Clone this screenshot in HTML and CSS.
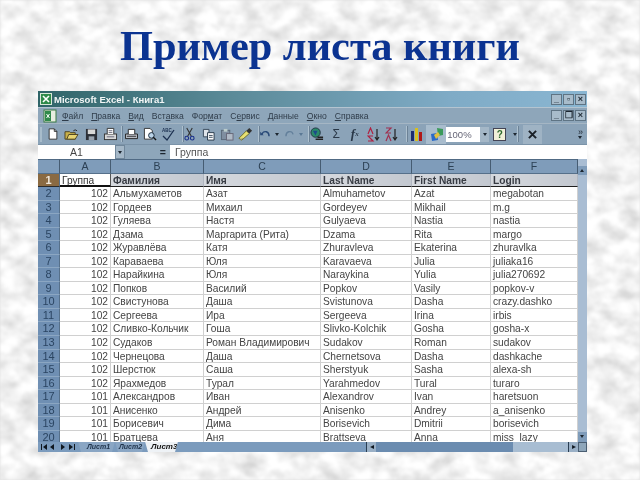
FILE: index.html
```html
<!DOCTYPE html>
<html lang="ru">
<head>
<meta charset="utf-8">
<title>Пример листа книги</title>
<link rel="stylesheet" href="styles.css">
</head>
<body>
<svg class="marble" width="640" height="480" aria-hidden="true">
  <filter id="marble" x="0" y="0" width="100%" height="100%">
    <feTurbulence type="fractalNoise" baseFrequency="0.05 0.07" numOctaves="4" seed="7"/>
    <feColorMatrix type="matrix" values="0.62 0 0 0 0.58  0.62 0 0 0 0.58  0.62 0 0 0 0.58  0 0 0 0 1"/>
  </filter>
  <rect width="640" height="480" filter="url(#marble)"/>
</svg>
<main class="slide">
  <h1 class="title">Пример листа книги</h1>
  <section class="win">
    <header class="titlebar">
      <svg class="xl" width="12" height="12" viewBox="0 0 12 12"><rect x=".5" y=".5" width="11" height="11" fill="#2f8a4a" stroke="#d8e8d8"/><path d="M3 3l6 6M9 3l-6 6" stroke="#fff" stroke-width="1.6"/></svg>
      <span class="apptitle">Microsoft Excel - Книга1</span>
      <span class="winbtns"><b>_</b><b class="sq">▫</b><b>×</b></span>
    </header>
    <nav class="menubar">
      <svg class="xl2" width="14" height="14" viewBox="0 0 14 14"><rect x="1" y="1" width="12" height="12" fill="#e8eee0" stroke="#3a7a44"/><rect x="2" y="2" width="6" height="10" fill="#2f8a4a"/><path d="M3.5 5l3 4M6.5 5l-3 4" stroke="#fff"/></svg>
      <span class="mi"><u>Ф</u>айл</span><span class="mi"><u>П</u>равка</span><span class="mi"><u>В</u>ид</span><span class="mi">Вст<u>а</u>вка</span><span class="mi">Фор<u>м</u>ат</span><span class="mi">С<u>е</u>рвис</span><span class="mi"><u>Д</u>анные</span><span class="mi"><u>О</u>кно</span><span class="mi"><u>С</u>правка</span>
      <span class="winbtns"><b>_</b><b class="sq">❐</b><b>×</b></span>
    </nav>
    <div class="toolbar">
      <i class="grip"></i>
      <span class="tb w19"><svg width="12" height="14" viewBox="0 0 14 15"><path d="M2.500 1.500h6l3 3v9h-9z" fill="#fff" stroke="#222"/><path d="M8.500 1.500v3h3" fill="none" stroke="#222"/></svg></span>
      <span class="tb w19"><svg width="15" height="13" viewBox="0 0 16 14"><path d="M1 4h5l1 1h5v7H1z" fill="#c8b048" stroke="#4a4020"/><path d="M3 12l2-5h10l-3 5z" fill="#e8d470" stroke="#4a4020"/><path d="M10 3q2-2 4 0" fill="none" stroke="#222"/></svg></span>
      <span class="tb w19"><svg width="13" height="13" viewBox="0 0 14 14"><rect x="1" y="1" width="12" height="12" fill="#2c3038"/><rect x="3" y="1.500" width="8" height="5" fill="#d8d8d8"/><rect x="4" y="9" width="6" height="4" fill="#9aa4b0"/></svg></span>
      <span class="tb w19"><svg width="15" height="14" viewBox="0 0 16 15"><rect x="1.500" y="7.500" width="13" height="6" fill="#d8d8d8" stroke="#333"/><path d="M4.500 7.500v-6h7v6" fill="#fff" stroke="#333"/><path d="M6 4h4M6 6h4M4 10.500h8" stroke="#667"/></svg></span>
      <i class="sep s1"></i>
      <span class="tb w185"><svg width="15" height="12" viewBox="0 0 16 13"><path d="M1.500 6.500h13v5h-13z" fill="#b8bcc4" stroke="#222"/><path d="M4.500 6.500v-5h7v5" fill="#fff" stroke="#222"/><path d="M3 9h10" stroke="#333"/></svg></span>
      <span class="tb w185"><svg width="14" height="14" viewBox="0 0 15 15"><path d="M1.500 1.500h6l2.500 2.500v9h-8.500z" fill="#fff" stroke="#333"/><circle cx="9" cy="9" r="3" fill="#bcd4e8" stroke="#123"/><path d="M11 11l3 3" stroke="#111" stroke-width="1.500"/></svg></span>
      <span class="tb w185"><svg width="15" height="15" viewBox="0 0 15 15"><path d="M2 9l4 4 7-10" fill="none" stroke="#1c3050" stroke-width="1.300"/><text class="abc" x="1" y="5">ABC</text></svg></span>
      <i class="sep s2"></i>
      <span class="tb w185"><svg width="11" height="14" viewBox="0 0 12 15"><path d="M3 1l5 9M9 1l-5 9" stroke="#333" stroke-width="1.200"/><circle cx="3" cy="12" r="2" fill="none" stroke="#1a2f8a" stroke-width="1.200"/><circle cx="9" cy="12" r="2" fill="none" stroke="#1a2f8a" stroke-width="1.200"/></svg></span>
      <span class="tb w185"><svg width="13" height="13" viewBox="0 0 14 14"><path d="M1.500 1.500h6v8h-6z" fill="#dfe4ea" stroke="#345"/><path d="M6 5h7v8H6z" fill="#fff" stroke="#234"/><path d="M7.500 8h4M7.500 10h4" stroke="#345"/></svg></span>
      <span class="tb w185"><svg width="14" height="13" viewBox="0 0 15 14"><rect x="1.500" y="2.500" width="9" height="10" fill="#7f8ea0" stroke="#5a6878"/><rect x="4" y="1" width="4" height="3" fill="#bcc"/><rect x="7" y="6" width="7" height="7" fill="#b0bac6" stroke="#667"/></svg></span>
      <span class="tb w185"><svg width="15" height="15" viewBox="0 0 16 16"><path d="M1 12l8-8 3 3-8 7z" fill="#e8e070" stroke="#6a6a30"/><path d="M9 4l3-3 3 3-3 3z" fill="#333"/><path d="M2 14l3-2" stroke="#887"/></svg></span>
      <i class="sep s3"></i>
      <span class="tb w14"><svg width="11" height="8" viewBox="0 0 12 9"><path d="M2 5q1-4 5-3 3 1 3 5" fill="none" stroke="#2a4a78" stroke-width="1.600"/><path d="M0 2l4 4H0z" fill="#2a4a78"/></svg></span>
      <span class="tb w8"><i class="dd"></i></span>
      <span class="tb w14 dim"><svg width="11" height="8" viewBox="0 0 12 9"><path d="M10 5Q9 1 5 2 2 3 2 7" fill="none" stroke="#5a7895" stroke-width="1.600"/></svg></span>
      <span class="tb w8"><i class="dd dim2"></i></span>
      <i class="sep s4"></i>
      <span class="tb w19"><svg width="14" height="14" viewBox="0 0 15 15"><circle cx="6" cy="6" r="5" fill="#2a8a6a" stroke="#234"/><path d="M3 4h5l-2 5z" fill="#1c4a8a"/><path d="M6 13h8M8 11h6" stroke="#222" stroke-width="1.600"/></svg></span>
      <span class="tb w185 sym">Σ</span>
      <span class="tb w185 fx"><em>f</em><small>x</small></span>
      <span class="tb w185"><svg width="13" height="15" viewBox="0 0 13 15"><path d="M1 7l2.500-6L6 7M1 14h5L1 9h5" fill="none" stroke="#b02040" stroke-width="1.200"/><path d="M10 2v11M8 10l2 3 2-3" fill="none" stroke="#222" stroke-width="1.200"/></svg></span>
      <span class="tb w185"><svg width="13" height="15" viewBox="0 0 13 15"><path d="M1 1h5L1 6h5M1 14l2.500-6L6 14" fill="none" stroke="#a03050" stroke-width="1.200"/><path d="M10 2v11M8 10l2 3 2-3" fill="none" stroke="#222" stroke-width="1.200"/></svg></span>
      <i class="sep s5"></i>
      <span class="tb w19"><svg width="15" height="15" viewBox="0 0 15 15"><rect x="2" y="4" width="3" height="10" fill="#1c2c70"/><rect x="6" y="1" width="3" height="13" fill="#d8c020"/><rect x="10" y="5" width="3" height="9" fill="#b01818"/></svg></span>
      <span class="tb w20 on"><svg width="15" height="15" viewBox="0 0 15 15"><path d="M8 1l6 1v6l-5 1z" fill="#3a9a5a"/><path d="M2 7l6-1 1 7-6 1z" fill="#2a6ac8"/><path d="M5 8l4-3 2 3-4 4z" fill="#e0c040"/></svg></span>
      <span class="zoombox">100%</span>
      <span class="zoomdd"><i class="dd"></i></span>
      <span class="tb w22"><span class="help">?</span></span>
      <span class="tb w8"><i class="dd"></i></span>
      <i class="sep s6"></i>
      <span class="tb xbtn"><svg width="9" height="9" viewBox="0 0 10 10"><path d="M1 1l8 8M9 1l-8 8" stroke="#1a2028" stroke-width="2.200"/></svg></span>
      <span class="chev">»<i class="dd"></i></span>
    </div>
    <div class="formula">
      <span class="namebox">A1</span>
      <span class="namedd"><i class="dd"></i></span>
      <span class="eq">=</span>
      <span class="fval">Группа</span>
    </div>
    <div class="body">
      <div class="sheet">
        <span class="corner"></span><span class="ch">A</span><span class="ch">B</span><span class="ch">C</span><span class="ch">D</span><span class="ch">E</span><span class="ch">F</span>

        <span class="rh act">1</span><span class="c hd sel">Группа</span><span class="c hd">Фамилия</span><span class="c hd">Имя</span><span class="c hd">Last Name</span><span class="c hd">First Name</span><span class="c hd">Login</span>

        <span class="rh">2</span><span class="c n">102</span><span class="c">Альмухаметов</span><span class="c">Азат</span><span class="c">Almuhametov</span><span class="c">Azat</span><span class="c">megabotan</span>
        <span class="rh">3</span><span class="c n">102</span><span class="c">Гордеев</span><span class="c">Михаил</span><span class="c">Gordeyev</span><span class="c">Mikhail</span><span class="c">m.g</span>
        <span class="rh">4</span><span class="c n">102</span><span class="c">Гуляева</span><span class="c">Настя</span><span class="c">Gulyaeva</span><span class="c">Nastia</span><span class="c">nastia</span>
        <span class="rh">5</span><span class="c n">102</span><span class="c">Дзама</span><span class="c">Маргарита (Рита)</span><span class="c">Dzama</span><span class="c">Rita</span><span class="c">margo</span>
        <span class="rh">6</span><span class="c n">102</span><span class="c">Журавлёва</span><span class="c">Катя</span><span class="c">Zhuravleva</span><span class="c">Ekaterina</span><span class="c">zhuravlka</span>
        <span class="rh">7</span><span class="c n">102</span><span class="c">Караваева</span><span class="c">Юля</span><span class="c">Karavaeva</span><span class="c">Julia</span><span class="c">juliaka16</span>
        <span class="rh">8</span><span class="c n">102</span><span class="c">Нарайкина</span><span class="c">Юля</span><span class="c">Naraykina</span><span class="c">Yulia</span><span class="c">julia270692</span>
        <span class="rh">9</span><span class="c n">102</span><span class="c">Попков</span><span class="c">Василий</span><span class="c">Popkov</span><span class="c">Vasily</span><span class="c">popkov-v</span>
        <span class="rh">10</span><span class="c n">102</span><span class="c">Свистунова</span><span class="c">Даша</span><span class="c">Svistunova</span><span class="c">Dasha</span><span class="c">crazy.dashko</span>
        <span class="rh">11</span><span class="c n">102</span><span class="c">Сергеева</span><span class="c">Ира</span><span class="c">Sergeeva</span><span class="c">Irina</span><span class="c">irbis</span>
        <span class="rh">12</span><span class="c n">102</span><span class="c">Сливко-Кольчик</span><span class="c">Гоша</span><span class="c">Slivko-Kolchik</span><span class="c">Gosha</span><span class="c">gosha-x</span>
        <span class="rh">13</span><span class="c n">102</span><span class="c">Судаков</span><span class="c">Роман Владимирович</span><span class="c">Sudakov</span><span class="c">Roman</span><span class="c">sudakov</span>
        <span class="rh">14</span><span class="c n">102</span><span class="c">Чернецова</span><span class="c">Даша</span><span class="c">Chernetsova</span><span class="c">Dasha</span><span class="c">dashkache</span>
        <span class="rh">15</span><span class="c n">102</span><span class="c">Шерстюк</span><span class="c">Саша</span><span class="c">Sherstyuk</span><span class="c">Sasha</span><span class="c">alexa-sh</span>
        <span class="rh">16</span><span class="c n">102</span><span class="c">Ярахмедов</span><span class="c">Турал</span><span class="c">Yarahmedov</span><span class="c">Tural</span><span class="c">turaro</span>
        <span class="rh">17</span><span class="c n">101</span><span class="c">Александров</span><span class="c">Иван</span><span class="c">Alexandrov</span><span class="c">Ivan</span><span class="c">haretsuon</span>
        <span class="rh">18</span><span class="c n">101</span><span class="c">Анисенко</span><span class="c">Андрей</span><span class="c">Anisenko</span><span class="c">Andrey</span><span class="c">a_anisenko</span>
        <span class="rh">19</span><span class="c n">101</span><span class="c">Борисевич</span><span class="c">Дима</span><span class="c">Borisevich</span><span class="c">Dmitrii</span><span class="c">borisevich</span>
        <span class="rh">20</span><span class="c n">101</span><span class="c">Братцева</span><span class="c">Аня</span><span class="c">Brattseva</span><span class="c">Anna</span><span class="c">miss_lazy</span>
      </div>
      <div class="vscroll"><span class="arrow up"></span><span class="track"></span><span class="arrow down"></span></div>
    </div>
    <footer class="tabs">
      <span class="nav">
        <svg width="40" height="10" viewBox="0 0 40 10"><path d="M3 2v6h1V2zM9 2L5 5l4 3zM16 2l-4 3 4 3zM23 2l4 3-4 3zM31 2l4 3-4 3zM36 2v6h1V2z" fill="#101820"/></svg>
      </span>
      <span class="tab t1">Лист1</span><span class="tab t2">Лист2</span><span class="tab on">Лист3</span>
      <span class="hfill"></span>
      <span class="hbtn">◂</span><span class="thumb"></span><span class="htrack"></span><span class="hbtn">▸</span><span class="hcorner"></span>
    </footer>
  </section>
</main>
</body>
</html>
```
FILE: styles.css
```css
* { box-sizing: border-box; }
html, body { margin: 0; padding: 0; }
body { width: 640px; height: 480px; overflow: hidden; background: #dedede; font-family: "Liberation Sans", Arial, sans-serif; }
.marble { position: absolute; left: 0; top: 0; filter: blur(.8px); }
.slide { position: relative; width: 640px; height: 480px; display: flex; flex-direction: column; }
.title { margin: 0; height: 91px; padding-top: 24px; text-align: center; font: bold 42.4px/44px "Liberation Serif", "Times New Roman", serif; color: #0b3391; filter: blur(.4px); }
.win { margin-left: 38px; width: 549px; height: 361px; display: flex; flex-direction: column; background: #8ea6ba; filter: blur(.55px); color: #222; }

.titlebar { height: 16px; display: flex; align-items: center; padding-left: 2px; background: linear-gradient(90deg, #2f6468, #5b8a98 35%, #7fabc6 75%, #8ab6d2); color: #f2f6f6; }
.xl { margin-right: 2px; flex: none; }
.apptitle { font-size: 9.5px; font-weight: bold; }
.winbtns { margin-left: auto; display: flex; gap: 1px; padding-right: 1px; }
.winbtns b { width: 11px; height: 11px; display: flex; align-items: center; justify-content: center; background: #a8bccb; border: 1px solid #5f7484; color: #1c2630; font-size: 9px; line-height: 9px; }

.menubar { height: 17px; display: flex; align-items: center; gap: 8px; padding-left: 5px; border-top: 1px solid #b4c4d0; border-bottom: 1px solid #a5b6c4; background: #8ea6ba; color: #2f3c4a; font-size: 8.6px; }
.xl2 { margin-right: -3px; flex: none; }
.mi u { text-decoration-thickness: 1px; }

.toolbar { height: 21px; display: flex; align-items: center; padding-left: 2px; background: #8ba3b8; border-bottom: 1px solid #7b93a8; }
.grip { width: 2px; height: 15px; margin-right: 1px; background: #a8bccb; flex: none; }
.tb { flex: none; height: 19px; display: flex; align-items: center; justify-content: center; }
.w19 { width: 19.3px; }
.w185 { width: 18.5px; }
.w14 { width: 15px; }
.w8 { width: 9px; }
.w20 { width: 20px; }
.w22 { width: 21px; }
.sep { flex: none; width: 2px; height: 16px; background: #adc0ce; border-right: 1px solid #6c8296; }
.s1 { margin: 0 -1px 0 1px; }
.s2 { margin: 0 -3px 0 4px; }
.s3 { margin: 0 -2px 0 3px; }
.s4 { margin: 0 -2px 0 2px; }
.s5 { margin: 0 -1px 0 5px; }
.s6 { margin: 0 4px 0 -2px; }
.dd { display: block; width: 0; height: 0; border: 2.5px solid transparent; border-top: 3px solid #1c2630; border-bottom: 0; }
.dim { opacity: .8; }
.dim2 { border-top-color: #5a7895; }
.abc { font: bold 4.5px "Liberation Sans", sans-serif; fill: #1c3050; }
.on { background: #a8bccd; }
.sym { font-size: 12px; color: #2a3848; }
.fx { font: italic bold 12px "Liberation Serif", serif; color: #2a3848; }
.fx em { font-size: 13px; }
.fx small { font-size: 7px; }
.zoombox { flex: none; width: 34px; height: 15px; padding-left: 1px; background: #fff; font-size: 9.5px; line-height: 15px; color: #667; }
.zoomdd { flex: none; width: 9px; height: 15px; display: flex; align-items: center; justify-content: center; background: #a4b7c7; }
.help { width: 13px; height: 13px; display: block; text-align: center; background: #f0f0d8; border: 1px solid #445; font: bold 10px/11px "Liberation Sans", sans-serif; color: #2d6a2d; }
.xbtn { width: 19px; background: #9fb3c4; }
.chev { margin-left: auto; width: 9px; font-size: 9px; line-height: 7px; color: #1c2630; }

.formula { height: 14px; display: flex; align-items: stretch; background: #8ea6ba; font-size: 10.5px; line-height: 14px; }
.namebox { width: 77px; background: #fff; text-align: center; color: #444; }
.namedd { width: 10px; display: flex; align-items: center; justify-content: center; background: #a4b7c7; border: 1px solid #70879b; }
.eq { width: 45px; padding-right: 4px; text-align: right; font-weight: bold; color: #1c2630; }
.fval { flex: 1; padding-left: 5px; background: #fff; color: #555; }

.body { flex: 1; min-height: 0; display: flex; background: #fff; }
.sheet { flex: none; width: 540px; overflow: hidden; display: grid; grid-template-columns: 22px 51px 93px 117px 91px 79px 87px; grid-template-rows: 15px 13px; grid-auto-rows: 13.55px; background: #fff; font-size: 10.2px; line-height: 13px; color: #444; }
.corner, .ch { background: #7f9cba; border-top: 1px solid #506a84; border-right: 1px solid #465c72; border-bottom: 1px solid #56708a; }
.ch { text-align: center; color: #2c4054; font-size: 10.5px; line-height: 13px; }
.rh { background: #6f8fb3; border-right: 1px solid #56708a; border-bottom: 1px solid #8ba6c2; text-align: center; color: #2b4562; font-size: 11px; line-height: 12.5px; }
.act { background: #8a6a42; color: #f0e8dc; font-weight: bold; border-bottom: 1px solid #2a2a2a; }
.c { padding: 0 2px; border-right: 1px solid #d0d0d0; border-bottom: 1px solid #d0d0d0; white-space: nowrap; overflow: hidden; }
.n { text-align: right; }
.hd { font-weight: bold; color: #383c44; background: linear-gradient(90deg, #d6d9de, #c3c8d0); border-right-color: #b0b6c0; border-bottom: 1.500px solid #202020; }
.sel { background: #fff; border: 0; border-bottom: 2px solid #111; border-right: 1px solid #555; color: #333; font-weight: normal; }

.vscroll { flex: 1; display: flex; flex-direction: column; background: #a9bdd3; }
.arrow { flex: none; height: 13px; background: #7f9cba; position: relative; }
.arrow.up { margin-top: 7px; height: 9px; }
.arrow.down { height: 10px; }
.arrow::after { content: ""; position: absolute; left: 2px; top: 3px; border: 2.5px solid transparent; }
.up::after { border-bottom: 3px solid #1c2630; border-top: 0; }
.down::after { border-top: 3px solid #1c2630; border-bottom: 0; }
.track { flex: 1; }

.tabs { height: 10.5px; flex: none; display: flex; align-items: stretch; background: #7b9bbd; line-height: 10px; color: #1c3048; }
.nav { flex: none; width: 40px; display: flex; }
.tab { flex: none; padding-left: 9px; font: italic bold 7px/10px "Liberation Sans", sans-serif; white-space: nowrap; background: #8aa6c4; clip-path: polygon(0 0, 100% 0, calc(100% - 3px) 100%, 3px 100%); }
.t1 { width: 37px; }
.t2 { width: 30px; padding-left: 4px; }
.tab.on { width: 33px; background: #eef2f6; color: #111; padding-left: 6px; font-size: 8px; }
.hfill { width: 188px; flex: none; }
.hbtn { flex: none; width: 10px; text-align: center; background: #9ab0c6; color: #101820; font-size: 8px; border-left: 1px solid #2a3e52; }
.thumb { flex: none; width: 137px; background: #6b8cb0; }
.htrack { flex: 1; background: #a8bdd2; }
.hcorner { flex: none; width: 9px; background: #8ea6ba; border: 1px solid #4a5e72; }
```
